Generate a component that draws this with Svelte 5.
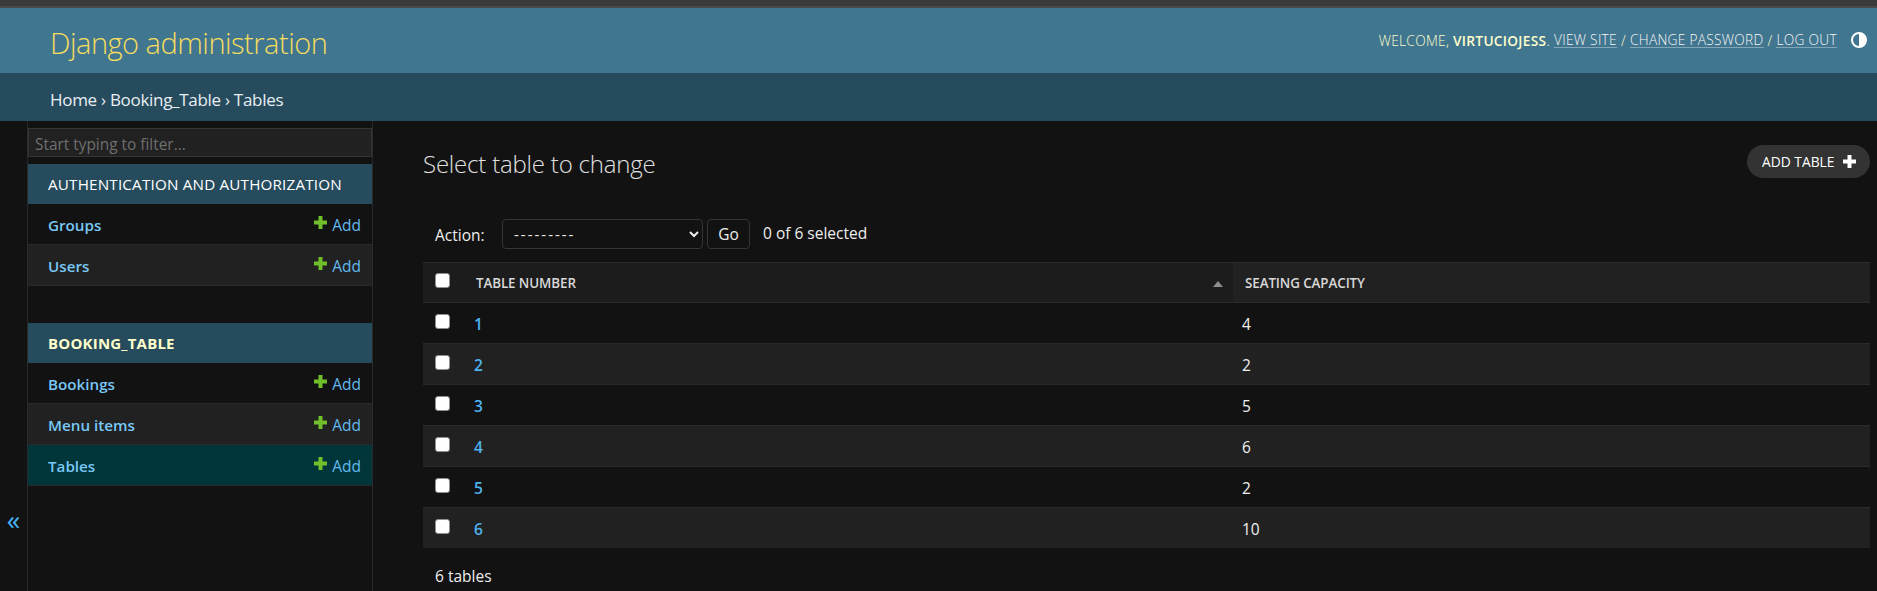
<script lang="ts">
  const authModels = ['Groups', 'Users'];
  const bookingModels = ['Bookings', 'Menu items', 'Tables'];
  const rows = [
    { num: 1, seats: 4 },
    { num: 2, seats: 2 },
    { num: 3, seats: 5 },
    { num: 4, seats: 6 },
    { num: 5, seats: 2 },
    { num: 6, seats: 10 }
  ];
</script>

{#snippet plus(color: string)}
  <svg class="plus" viewBox="0 0 13 13" width="13" height="13" aria-hidden="true">
    <path d="M4.5 0h4v4.500H13v4H8.500V13h-4V8.500H0v-4h4.500z" fill={color} />
  </svg>
{/snippet}

{#snippet model(name: string, current: boolean)}
  <div class="model" class:current>
    <a class="model-name" href="#top">{name}</a>
    <a class="model-add" href="#top">{@render plus('#70bf2b')}Add</a>
  </div>
{/snippet}

<div class="page">
  <div class="topstrip"></div>
  <header class="header">
    <div class="brand">Django administration</div>
    <div class="tools">
      <span>Welcome, <strong>virtuciojess</strong>.</span>
      <a href="#top">View site</a> /
      <a href="#top">Change password</a> /
      <a href="#top">Log out</a>
      <svg class="theme" viewBox="0 0 16 16" width="16" height="16" aria-hidden="true">
        <circle cx="8" cy="8" r="7" fill="none" stroke="#fff" stroke-width="2" />
        <path d="M8 1a7 7 0 0 1 0 14z" fill="#fff" />
      </svg>
    </div>
  </header>
  <nav class="crumbs">Home › Booking_Table › Tables</nav>

  <div class="body">
    <div class="toggle"><span>«</span></div>
    <aside class="side">
      <input class="filter" placeholder="Start typing to filter..." />
      <div class="caption">Authentication and Authorization</div>
      {#each authModels as name}
        {@render model(name, false)}
      {/each}
      <div class="caption second"><strong>Booking_Table</strong></div>
      {#each bookingModels as name}
        {@render model(name, name === 'Tables')}
      {/each}
    </aside>

    <main class="main">
      <div class="title-row">
        <h1>Select table to change</h1>
        <a class="addlink" href="#top">Add table{@render plus('#fff')}</a>
      </div>

      <div class="actions">
        <label for="action">Action:</label>
        <select id="action">
          <option>---------</option>
        </select>
        <button>Go</button>
        <span class="count">0 of 6 selected</span>
      </div>

      <table>
        <thead>
          <tr>
            <th class="check"><input type="checkbox" /></th>
            <th class="sorted">
              <div class="th-inner">Table number<span class="arrow"></span></div>
            </th>
            <th class="cap">Seating capacity</th>
          </tr>
        </thead>
        <tbody>
          {#each rows as row}
            <tr>
              <td class="check"><input type="checkbox" /></td>
              <td class="num"><a href="#top">{row.num}</a></td>
              <td class="seats">{row.seats}</td>
            </tr>
          {/each}
        </tbody>
      </table>
      <p class="paginator">6 tables</p>
    </main>
  </div>
</div>

<style>
  :global(body) {
    margin: 0;
    background: #121212;
    overflow: hidden;
  }
  .page {
    height: 591px;
    overflow: hidden;
    display: flex;
    flex-direction: column;
    font-family: 'Open Sans', 'Noto Sans', sans-serif;
    font-size: 14px;
    color: #eeeeee;
    background: #121212;
  }
  a {
    text-decoration: none;
  }
  .topstrip {
    height: 6px;
    background: #3a3a3a;
    border-bottom: 2px solid #4a4a4a;
  }
  .header {
    height: 65px;
    flex: none;
    display: flex;
    align-items: center;
    justify-content: space-between;
    padding: 0 10px 0 50px;
    background: #417690;
  }
  .brand {
    font-size: 29px;
    font-weight: 300;
    color: #f5dd5d;
    letter-spacing: -0.5px;
    margin-top: 3px;
  }
  .tools {
    display: flex;
    align-items: center;
    gap: 4px;
    font-size: 13.7px;
    font-weight: 300;
    text-transform: uppercase;
    letter-spacing: 0.3px;
    color: #ffc;
    margin-top: -1px;
  }
  .tools strong {
    font-weight: 600;
  }
  .tools a {
    color: #f5f5f5;
    border-bottom: 1px solid rgba(255, 255, 255, 0.35);
    line-height: 15px;
  }
  .theme {
    margin-left: 10px;
  }
  .crumbs {
    height: 48px;
    flex: none;
    box-sizing: border-box;
    padding: 4px 50px 0;
    display: flex;
    align-items: center;
    background: #264b5d;
    color: #e8eef2;
    font-size: 17px;
    letter-spacing: -0.3px;
  }
  .body {
    flex: 1;
    display: flex;
    min-height: 0;
  }
  .toggle {
    width: 27px;
    flex: none;
    box-sizing: content-box;
    border-right: 1px solid #2a2a2a;
    display: flex;
    align-items: flex-end;
    justify-content: center;
    padding-bottom: 52px;
    color: #44b3f5;
    font-size: 27px;
    line-height: 38px;
  }
  .side {
    width: 344px;
    flex: none;
    border-right: 1px solid #2a2a2a;
    display: flex;
    flex-direction: column;
    padding-top: 7px;
  }
  .filter {
    height: 29px;
    box-sizing: border-box;
    width: 100%;
    margin: 0 0 7px;
    padding: 3px 6px 0;
    background: #212121;
    border: 1px solid #353535;
    color: #eee;
    font: inherit;
    font-size: 15.4px;
    outline: none;
  }
  .filter::placeholder {
    color: #6f6f6f;
  }
  .caption {
    height: 40px;
    flex: none;
    display: flex;
    align-items: center;
    padding-left: 20px;
    background: #264b5d;
    color: #fff;
    font-size: 15.2px;
    text-transform: uppercase;
    letter-spacing: 0.2px;
  }
  .caption strong {
    color: #ffc;
    font-size: 15px;
    font-weight: 700;
  }
  .second {
    margin-top: 37px;
  }
  .model {
    height: 41px;
    box-sizing: border-box;
    flex: none;
    display: flex;
    align-items: center;
    justify-content: space-between;
    padding: 2px 11px 0 20px;
    border-bottom: 1px solid #2a2a2a;
  }
  .model:has(+ .model) + .model:not(.current) {
    background: #212121;
  }
  .model.current {
    background: #00363a;
  }
  .model-name {
    color: #79c8f5;
    font-weight: 600;
    font-size: 15.2px;
  }
  .model-add {
    color: #62b8ee;
    font-size: 15.5px;
    display: flex;
    align-items: center;
    gap: 5px;
  }
  .model-add .plus {
    position: relative;
    top: -3px;
  }
  .main {
    flex: 1;
    min-width: 0;
    padding: 0 7px 0 50px;
  }
  .title-row {
    display: flex;
    justify-content: space-between;
    align-items: flex-start;
    height: 98px;
    padding-top: 24px;
    box-sizing: border-box;
  }
  h1 {
    margin: 2px 0 0;
    font-size: 24px;
    font-weight: 300;
    line-height: 34px;
    color: #e0e0e0;
    letter-spacing: -0.2px;
  }
  .addlink {
    height: 33px;
    width: 123px;
    box-sizing: border-box;
    display: flex;
    align-items: center;
    gap: 9px;
    padding-left: 15px;
    border-radius: 17px;
    background: #333333;
    color: #fff;
    font-size: 13.8px;
    text-transform: uppercase;
  }
  .actions {
    height: 43px;
    display: flex;
    align-items: flex-start;
    padding-left: 12px;
    font-size: 15.5px;
  }
  .actions label {
    width: 67px;
    line-height: 32px;
  }
  select {
    width: 201px;
    height: 30px;
    padding: 0 7px;
    color-scheme: dark;
    background: #121212;
    border: 1px solid #353535;
    border-radius: 4px;
    color: #eee;
    font: inherit;
    font-size: 15px;
    letter-spacing: 2px;
  }
  button {
    width: 43px;
    height: 30px;
    margin-left: 4px;
    padding: 0;
    background: #121212;
    border: 1px solid #353535;
    border-radius: 4px;
    color: #eee;
    font: inherit;
    font-size: 15.5px;
  }
  .count {
    margin-left: 13px;
    line-height: 29px;
  }
  table {
    width: 100%;
    border-collapse: collapse;
    table-layout: fixed;
    border-top: 1px solid #2a2a2a;
  }
  th {
    height: 39px;
    padding: 0;
    background: #212121;
    border-bottom: 1px solid #2a2a2a;
    text-align: left;
    font-size: 13.4px;
    font-weight: 600;
    color: #d8d8d8;
    text-transform: uppercase;
    letter-spacing: -0.1px;
  }
  th.check {
    width: 41px;
    background: #1c1c1c;
  }
  .check {
    padding: 0 0 4px 12px;
    box-sizing: border-box;
    width: 41px;
    vertical-align: middle;
  }
  .check input {
    display: block;
    margin: 0;
    width: 15px;
    height: 15px;
    appearance: none;
    box-sizing: border-box;
    background: #fff;
    border: 1px solid #8f8f8f;
    border-radius: 3px;
  }
  .sorted {
    width: 769px;
    background: #1c1c1c;
  }
  .th-inner {
    display: flex;
    justify-content: space-between;
    align-items: center;
    padding: 0 10px 0 12px;
  }
  .arrow {
    width: 0;
    height: 0;
    border: 5px solid transparent;
    border-top: 0;
    border-bottom: 6px solid #8f8f8f;
    margin-top: 2px;
  }
  .cap {
    padding-left: 12px;
  }
  td {
    height: 38px;
    padding: 2px 0 0;
    border-bottom: 1px solid #2a2a2a;
    box-sizing: content-box;
  }
  tbody tr:nth-child(even) td {
    background: #212121;
  }
  tbody tr:last-child td {
    border-bottom-color: #121212;
  }
  .num {
    padding-left: 10px;
    font-weight: 600;
    font-size: 15.5px;
  }
  .num a {
    color: #4eb3ef;
  }
  .seats {
    padding-left: 9px;
    color: #f0f0f0;
    font-size: 15.5px;
  }
  .paginator {
    margin: 16px 0 0 12px;
    font-size: 15.5px;
  }
</style>
